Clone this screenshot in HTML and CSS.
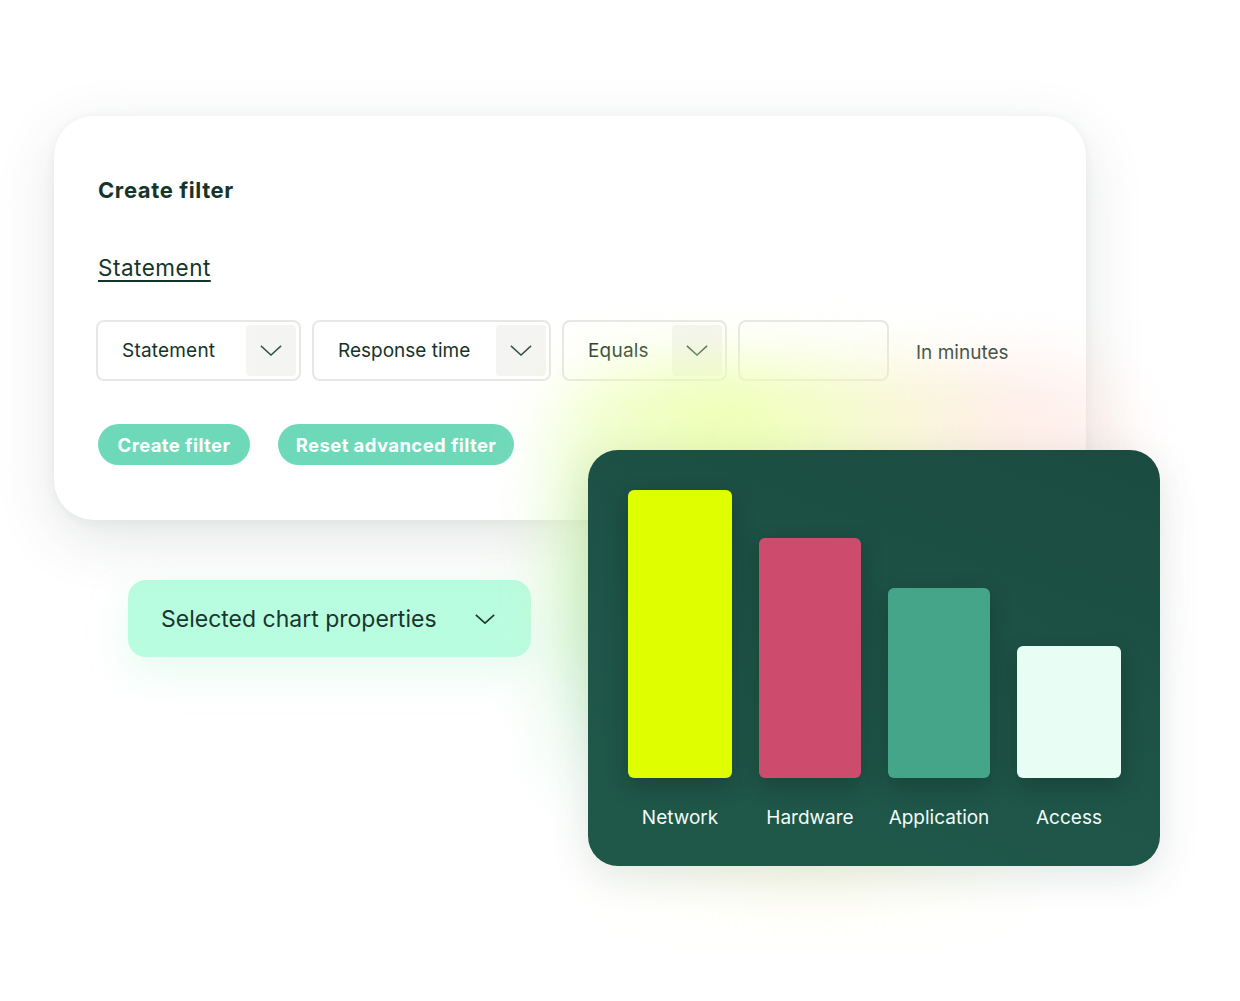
FILE: index.html
```html
<!DOCTYPE html>
<html lang="en">
<head>
<meta charset="utf-8">
<title>Create filter</title>
<link rel="stylesheet" href="styles.css">
</head>
<body>
<div class="stage">
  <section class="card">
    <h2 class="title">Create filter</h2>
    <a class="link" href="#">Statement</a>
    <div class="fields">
      <div class="select s1"><span>Statement</span><span class="chev"><svg viewBox="0 0 24 12" width="22" height="11"><path d="M1 1 L12 11 L23 1" fill="none" stroke="#2e4a41" stroke-width="1.6"/></svg></span></div>
      <div class="select s2"><span>Response time</span><span class="chev"><svg viewBox="0 0 24 12" width="22" height="11"><path d="M1 1 L12 11 L23 1" fill="none" stroke="#2e4a41" stroke-width="1.6"/></svg></span></div>
      <div class="select s3"><span>Equals</span><span class="chev"><svg viewBox="0 0 24 12" width="22" height="11"><path d="M1 1 L12 11 L23 1" fill="none" stroke="#2e4a41" stroke-width="1.6"/></svg></span></div>
      <div class="input"></div>
      <span class="unit">In minutes</span>
    </div>
    <div class="buttons">
      <button class="btn b1">Create filter</button>
      <button class="btn b2">Reset advanced filter</button>
    </div>
  </section>
  <div class="lower">
    <div class="props"><span>Selected chart properties</span><svg viewBox="0 0 24 12" width="20" height="10"><path d="M1 1 L12 11 L23 1" fill="none" stroke="#1e3a30" stroke-width="2"/></svg></div>
    <div class="chartwrap">
      <div class="chart">
        <div class="col"><div class="bar network" style="height:288px"></div><span class="lbl">Network</span></div>
        <div class="col"><div class="bar hardware" style="height:240px"></div><span class="lbl">Hardware</span></div>
        <div class="col"><div class="bar application" style="height:190px"></div><span class="lbl">Application</span></div>
        <div class="col"><div class="bar access" style="height:132px"></div><span class="lbl">Access</span></div>
      </div>
    </div>
  </div>
</div>
</body>
</html>
```

FILE: styles.css
```css
* { box-sizing: border-box; }
html, body { margin: 0; padding: 0; background: #ffffff; }
body {
  font-family: Inter, "Noto Sans", "DejaVu Sans", sans-serif;
  color: #16332a;
  width: 1240px;
  height: 1001px;
  overflow: hidden;
}
.stage {
  padding-top: 116px;
}
.card {
  position: relative;
  margin-left: 54px;
  width: 1032px;
  height: 404px;
  background: #ffffff;
  border-radius: 40px;
  box-shadow: 0 18px 60px rgba(40, 60, 50, 0.13), 0 2px 12px rgba(40, 60, 50, 0.05);
  padding: 60px 0 0 44px;
}
.title {
  margin: 0;
  font-size: 22px;
  line-height: 28px;
  font-weight: 700;
  color: #15352b;
  letter-spacing: 0.6px;
}
.link {
  display: inline-block;
  margin-top: 50px;
  font-size: 22.5px;
  line-height: 28px;
  color: #15352b;
  text-decoration: underline;
  text-decoration-thickness: 1.5px;
  text-underline-offset: 4px;
  letter-spacing: 0.5px;
}
.fields {
  display: flex;
  align-items: center;
  gap: 11px;
  margin-top: 38px;
  margin-left: -2px;
}
.select, .input {
  height: 61px;
  border: 2px solid #e7e8e5;
  border-radius: 8px;
  background: rgba(255,255,255,0.6);
}
.select {
  display: flex;
  align-items: center;
  justify-content: space-between;
  padding: 3px 3px 3px 24px;
  font-size: 19px;
  letter-spacing: 0.2px;
  color: #16332a;
}
.s2 span:first-child { letter-spacing: 0; }
.chev {
  width: 50px;
  height: 51px;
  background: #f4f4f2;
  border-radius: 4px;
  display: flex;
  align-items: center;
  justify-content: center;
  opacity: 0.95;
}
.s1 { width: 205px; }
.s2 { width: 239px; }
.s3 { width: 165px; }
.input { width: 151px; }
.unit {
  margin-left: 16px;
  font-size: 19px;
  padding-top: 4px;
  color: #16332a;
}
.buttons {
  display: flex;
  gap: 28px;
  margin-top: 43px;
}
.btn {
  height: 41px;
  border: none;
  border-radius: 21px;
  background: #6ed9b9;
  color: #ffffff;
  font-family: inherit;
  font-size: 18.5px;
  font-weight: 700;
  padding: 0;
  letter-spacing: 0.4px;
}
.b1 { width: 152px; }
.b2 { width: 236px; }
.lower {
  display: flex;
  align-items: flex-start;
}
.props {
  margin-left: 128px;
  margin-top: 60px;
  width: 403px;
  height: 77px;
  border-radius: 18px;
  background: #b9fde0;
  display: flex;
  align-items: center;
  justify-content: space-between;
  padding: 0 36px 0 33px;
  font-size: 23px;
  color: #1a352c;
  box-shadow: 0 14px 40px rgba(150, 240, 200, 0.25);
}
.chartwrap {
  position: relative;
  z-index: 1;
  margin-left: 57px;
  margin-top: -70px;
}
.chartwrap::before {
  content: "";
  position: absolute;
  z-index: -1;
  left: -40px;
  right: 30px;
  top: -90px;
  bottom: -40px;
  border-radius: 80px;
  background:
    radial-gradient(ellipse at 30% 12%, rgba(236, 255, 170, 0.9), rgba(236,255,170,0) 50%),
    radial-gradient(ellipse at 78% 12%, rgba(255, 222, 212, 0.55), rgba(255,222,212,0) 45%),
    radial-gradient(ellipse at 0% 45%, rgba(190, 240, 205, 0.8), rgba(190,240,205,0) 50%),
    radial-gradient(ellipse at 45% 100%, rgba(250, 250, 215, 0.5), rgba(250,250,215,0) 50%);
  filter: blur(28px);
}
.chart {
  width: 572px;
  height: 416px;
  border-radius: 30px;
  background: linear-gradient(200deg, #1b4b40 0%, #1e5548 60%, #1f5849 100%);
  display: grid;
  grid-template-columns: 104px 102px 102px 104px;
  column-gap: 27px;
  padding: 0 40px 0 40px;
  align-items: end;
  box-shadow: 0 10px 40px rgba(40, 80, 60, 0.14);
}
.col {
  display: flex;
  flex-direction: column;
  align-items: center;
  padding-bottom: 36px;
}
.bar {
  width: 100%;
  border-radius: 6px;
  box-shadow: 0 8px 22px rgba(0, 20, 10, 0.25);
}
.network { background: #dfff00; }
.hardware { background: #cd4c6e; }
.application { background: #44a589; }
.access { background: #e8fdf4; }
.lbl {
  margin-top: 28px;
  font-size: 19px;
  line-height: 24px;
  color: #f2fbf7;
  white-space: nowrap;
}
```
